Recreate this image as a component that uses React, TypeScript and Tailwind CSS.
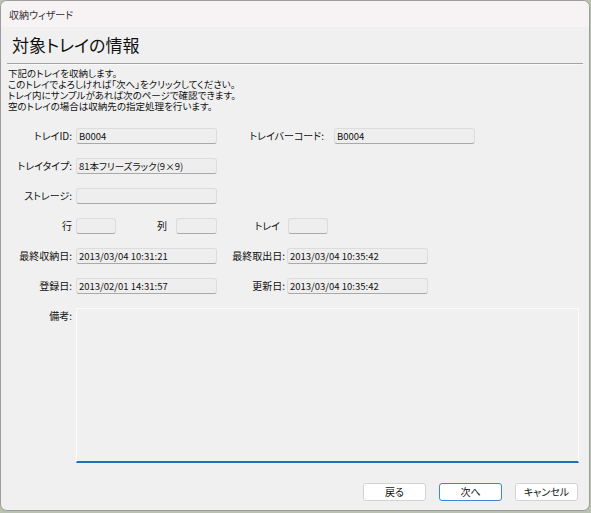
import React from "react";

const FONT = "[font-family:'Noto_Sans_CJK_JP','Noto_Sans',sans-serif] [font-feature-settings:'palt']";

function Box({ value, w }: { value?: string; w: string }) {
  return (
    <div
      className={`${w} h-[16px] shrink-0 rounded-[3px] border border-[#dcdcdc] border-b-[#a9a9a9] bg-[#eeeeee] pl-[2px] text-[9.5px] leading-[14px] text-[#111] whitespace-nowrap overflow-hidden`}
    >
      {value}
    </div>
  );
}

function Label({ text, w, mr }: { text: string; w: string; mr: string }) {
  return (
    <div className={`${w} ${mr} shrink-0 text-right text-[10px] leading-[16px] text-[#111] whitespace-nowrap`}>
      {text}
    </div>
  );
}

export default function App() {
  return (
    <div className={`w-[591px] h-[513px] bg-[#b9c2b0] ${FONT}`}>
      <div className="w-[590px] h-[511px] rounded-[7px] border border-[#9c9c9c] bg-[#f0f0f0] overflow-hidden flex flex-col">
        {/* title bar */}
        <div className="h-[26px] bg-[#f7f2f4] flex items-center pl-[8px] text-[10px] text-[#333]">収納ウィザード</div>

        {/* heading */}
        <div className="h-[36px] flex items-center pl-[11px] text-[17px] font-normal text-[#111]">対象トレイの情報</div>
        <div className="ml-[6px] w-[576px] h-px bg-[#a3a3a3]" />
        <div className="ml-[6px] w-[576px] h-px bg-[#fafafa]" />

        {/* instructions */}
        <div className="mt-[3px] pl-[7px] text-[9.5px] leading-[11px] text-[#111]">
          <p>下記のトレイを収納します。</p>
          <p>このトレイでよろしければ「次へ」をクリックしてください。</p>
          <p>トレイ内にサンプルがあれば次のページで確認できます。</p>
          <p>空のトレイの場合は収納先の指定処理を行います。</p>
        </div>

        {/* form */}
        <div className="mt-[16px] pl-[7px] flex flex-col gap-[14px]">
          <div className="flex">
            <Label text="トレイID:" w="w-[64px]" mr="mr-[4px]" />
            <Box value="B0004" w="w-[141px]" />
            <Label text="トレイバーコード:" w="w-[107px]" mr="mr-[10px]" />
            <Box value="B0004" w="w-[141px]" />
          </div>
          <div className="flex">
            <Label text="トレイタイプ:" w="w-[64px]" mr="mr-[4px]" />
            <Box value="81本フリーズラック(9×9)" w="w-[141px]" />
          </div>
          <div className="flex">
            <Label text="ストレージ:" w="w-[64px]" mr="mr-[4px]" />
            <Box w="w-[141px]" />
          </div>
          <div className="flex">
            <Label text="行" w="w-[64px]" mr="mr-[4px]" />
            <Box w="w-[40px]" />
            <Label text="列" w="w-[51px]" mr="mr-[9px]" />
            <Box w="w-[41px]" />
            <Label text="トレイ" w="w-[63px]" mr="mr-[8px]" />
            <Box w="w-[40px]" />
          </div>
          <div className="flex">
            <Label text="最終収納日:" w="w-[64px]" mr="mr-[4px]" />
            <Box value="2013/03/04 10:31:21" w="w-[141px]" />
            <Label text="最終取出日:" w="w-[68px]" mr="mr-[2px]" />
            <Box value="2013/03/04 10:35:42" w="w-[141px]" />
          </div>
          <div className="flex">
            <Label text="登録日:" w="w-[64px]" mr="mr-[4px]" />
            <Box value="2013/02/01 14:31:57" w="w-[141px]" />
            <Label text="更新日:" w="w-[68px]" mr="mr-[2px]" />
            <Box value="2013/03/04 10:35:42" w="w-[141px]" />
          </div>
          <div className="flex">
            <Label text="備考:" w="w-[64px]" mr="mr-[4px]" />
            <div className="w-[503px] h-[155px] border border-[#fbfbfb] border-b-2 border-b-[#1f6fc5] bg-[#f0f0f0]" />
          </div>
        </div>

        {/* buttons */}
        <div className="mt-[20px] flex justify-end gap-[13px] pr-[11px] text-[10px]">
          <button className="w-[63px] h-[18px] rounded-[3px] border border-[#d3d3d3] bg-white text-[#111] leading-none">戻る</button>
          <button className="w-[63px] h-[18px] rounded-[3px] border border-[#3f86d4] bg-white text-[#111] leading-none">次へ</button>
          <button className="w-[63px] h-[18px] rounded-[3px] border border-[#d3d3d3] bg-white text-[#111] leading-none">キャンセル</button>
        </div>
      </div>
    </div>
  );
}
